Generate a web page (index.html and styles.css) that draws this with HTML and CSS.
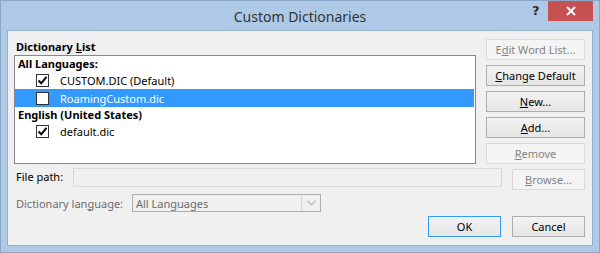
FILE: index.html
```html
<!DOCTYPE html>
<html>
<head>
<meta charset="utf-8">
<link rel="stylesheet" href="styles.css">
</head>
<body>
<div class="window">
  <div class="titlebar">
    <div class="title">Custom Dictionaries</div>
    <div class="help">?</div>
    <div class="close"><svg width="10" height="10" viewBox="0 0 10 10"><path d="M1 1 L9 9 M9 1 L1 9" stroke="#fff" stroke-width="2"/></svg></div>
  </div>
  <div class="client">
    <div class="top">
      <div class="left">
        <div class="section-label">Dictionary <u>L</u>ist</div>
        <div class="list">
          <div class="group">All Languages:</div>
          <div class="item"><span class="cb"><svg width="11" height="11" viewBox="0 0 11 11"><path d="M1.5 5.5 L4.2 8.3 L9.5 1.8" fill="none" stroke="#000" stroke-width="2"/></svg></span>CUSTOM.DIC (Default)</div>
          <div class="item selected"><span class="cb"></span>RoamingCustom.dic</div>
          <div class="group">English (United States)</div>
          <div class="item"><span class="cb"><svg width="11" height="11" viewBox="0 0 11 11"><path d="M1.5 5.5 L4.2 8.3 L9.5 1.8" fill="none" stroke="#000" stroke-width="2"/></svg></span>default.dic</div>
        </div>
      </div>
      <div class="buttons">
        <div class="btn disabled">E<u>d</u>it Word List...</div>
        <div class="btn"><u>C</u>hange Default</div>
        <div class="btn"><u>N</u>ew...</div>
        <div class="btn"><u>A</u>dd...</div>
        <div class="btn disabled"><u>R</u>emove</div>
      </div>
    </div>
    <div class="path-row">
      <div class="path-label">File path:</div>
      <div class="path-input"></div>
      <div class="btn small disabled"><u>B</u>rowse...</div>
    </div>
    <div class="lang-row">
      <div class="lang-label">Dictionary lan<u>g</u>uage:</div>
      <div class="combo">
        <span class="combo-text">All Languages</span>
        <span class="combo-btn"><svg width="9" height="6" viewBox="0 0 9 6"><path d="M0.5 0.8 L4.5 4.8 L8.5 0.8" fill="none" stroke="#bdbdbd" stroke-width="1.4"/></svg></span>
      </div>
    </div>
    <div class="bottom-row">
      <div class="btn small default">OK</div>
      <div class="btn small">Cancel</div>
    </div>
  </div>
</div>
</body>
</html>
```
FILE: styles.css
```css
* { box-sizing: border-box; }
html, body { margin: 0; padding: 0; background: #fff; }
body {
  font-family: "Noto Sans", "Open Sans", sans-serif;
  font-size: 11px;
  color: #000;
}
u { text-decoration: underline; text-underline-offset: 1px; }

.window {
  width: 600px;
  height: 253px;
  background: #adc9e6;
  border: 1px solid #8ba7c7;
  display: flex;
  flex-direction: column;
  overflow: hidden;
}

.titlebar {
  height: 29px;
  flex-shrink: 0;
  position: relative;
  display: flex;
  justify-content: center;
  align-items: center;
}
.title {
  font-size: 14px;
  color: #333;
  margin-top: 1px;
}
.help {
  position: absolute;
  left: 531px;
  top: 2px;
  font-family: "DejaVu Sans", sans-serif;
  font-weight: bold;
  font-size: 13px;
  color: #2b2b2b;
}
.close {
  position: absolute;
  left: 547px;
  top: -1px;
  width: 45px;
  height: 21px;
  background: #c75050;
  display: flex;
  align-items: center;
  justify-content: center;
}

.client {
  margin: 0 6px 6px 6px;
  flex: 1;
  min-height: 0;
  background: #f0f0f0;
  border: 1px solid #94aecd;
  padding: 8px 7px 0 6px;
  display: flex;
  flex-direction: column;
}

.top {
  display: flex;
  gap: 10px;
}
.left {
  width: 462px;
  display: flex;
  flex-direction: column;
}
.section-label {
  font-weight: bold;
  height: 16px;
  line-height: 16px;
  padding-left: 2px;
}
.list {
  height: 109px;
  background: #fff;
  border: 1px solid #828790;
  padding: 0 1px 0 0;
}
.group {
  font-weight: bold;
  height: 15px;
  line-height: 15px;
  padding-left: 3px;
}
.item {
  height: 18px;
  display: flex;
  align-items: center;
  padding-left: 21px;
  white-space: nowrap;
}
.item.selected {
  background: #3399ff;
  color: #fff;
}
.cb {
  width: 13px;
  height: 13px;
  border: 1px solid #333;
  background: #fff;
  margin-right: 11px;
  display: flex;
  align-items: center;
  justify-content: center;
  flex-shrink: 0;
}

.buttons {
  width: 99px;
  display: flex;
  flex-direction: column;
  gap: 5px;
}
.btn {
  height: 21px;
  border: 1px solid #adadad;
  background: linear-gradient(#f2f2f2, #e6e6e6);
  display: flex;
  align-items: center;
  justify-content: center;
  color: #000;
  white-space: nowrap;
  flex-shrink: 0;
}
.btn.disabled {
  border-color: #d9d9d9;
  background: #f4f4f4;
  color: #838383;
}
.btn.small { width: 73px; }
.btn.default { border-color: #3399ff; }

.path-row {
  display: flex;
  align-items: flex-start;
  margin-top: 4px;
}
.path-label {
  width: 59px;
  padding-left: 2px;
  line-height: 18px;
  white-space: nowrap;
}
.path-input {
  width: 429px;
  height: 19px;
  border: 1px solid #d9d9d9;
  background: #f0f0f0;
  margin-right: 10px;
}
.path-row .btn { margin-top: 1px; }

.lang-row {
  display: flex;
  align-items: center;
  margin-top: 4px;
}
.lang-label {
  width: 118px;
  padding-left: 2px;
  color: #6d6d6d;
  white-space: nowrap;
}
.combo {
  width: 189px;
  height: 18px;
  border: 1px solid #adadad;
  background: #f0f0f0;
  display: flex;
  align-items: center;
  justify-content: space-between;
}
.combo-text {
  color: #6d6d6d;
  padding-left: 3px;
}
.combo-btn {
  width: 19px;
  height: 16px;
  border-left: 1px solid #d9d9d9;
  display: flex;
  align-items: center;
  justify-content: center;
}

.bottom-row {
  display: flex;
  justify-content: flex-end;
  gap: 11px;
  margin-top: 4px;
}
```
